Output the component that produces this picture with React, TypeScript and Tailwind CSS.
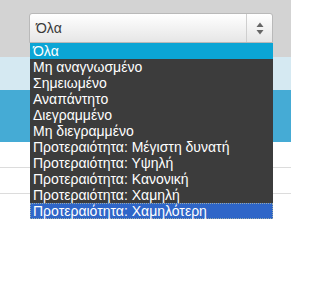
import React from "react";

const options = [
  "Μη αναγνωσμένο",
  "Σημειωμένο",
  "Αναπάντητο",
  "Διεγραμμένο",
  "Μη διεγραμμένο",
  "Προτεραιότητα: Μέγιστη δυνατή",
  "Προτεραιότητα: Υψηλή",
  "Προτεραιότητα: Κανονική",
  "Προτεραιότητα: Χαμηλή",
];

export default function App() {
  return (
    <div className="relative w-[291px] h-[301px] bg-white overflow-hidden font-['Liberation_Sans',Arial,sans-serif]">
      {/* page behind the dropdown */}
      <div className="h-[57px] bg-[#d3d3d3]" />
      <div className="h-[33px] bg-[#d5e9f2]" />
      <div className="h-[52px] bg-[#45abd5]" />
      <div className="h-[26px] border-b border-[#dcdcdc]" />
      <div className="h-[26px] border-b border-[#dcdcdc]" />

      {/* select control */}
      <div className="absolute left-[29px] top-[13px] w-[244px] h-[30px] flex border border-[#b9b9b9] rounded-t-[3px] bg-gradient-to-b from-white to-[#e6e6e6]">
        <div className="flex-1 flex items-center pl-[6px] text-[14px] text-[#3a3a3a]">Όλα</div>
        <div className="w-[26px] flex items-center justify-center border-l border-[#cfcfcf]">
          <svg width="8" height="13" viewBox="0 0 8 13">
            <path d="M4 0.5 L7.5 5 L0.5 5 Z" fill="#666" />
            <path d="M4 12.5 L7.5 8 L0.5 8 Z" fill="#666" />
          </svg>
        </div>
      </div>

      {/* open list */}
      <div className="absolute left-[30px] top-[43px] w-[243px] bg-[#3c3c3c] text-[14px] leading-[16px] text-white">
        <div className="h-[16px] pl-[3px] bg-[#0ba5d5]">Όλα</div>
        {options.map((o) => (
          <div key={o} className="h-[16px] pl-[3px] whitespace-nowrap">
            {o}
          </div>
        ))}
        <div className="h-[16px] pl-[2px] bg-[#2f66c8] border border-dotted border-[#9aa]">
          <span className="relative -top-px">Προτεραιότητα: Χαμηλότερη</span>
        </div>
      </div>
    </div>
  );
}
